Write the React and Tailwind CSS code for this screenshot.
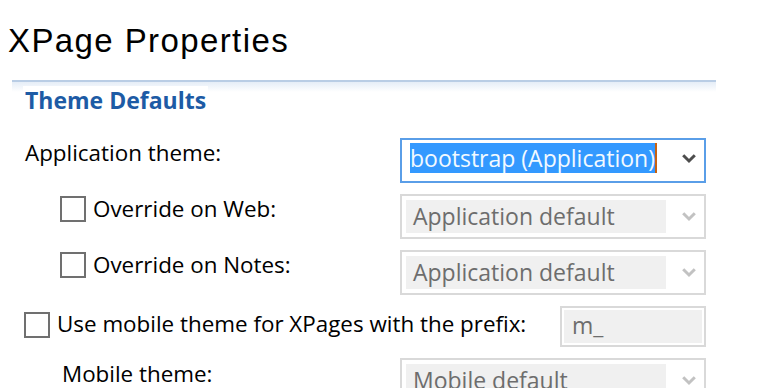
import React from 'react';

function Chevron({ color }) {
  return (
    <svg width="14" height="11" viewBox="0 0 14 11" className="block">
      <path d="M1.2 2.2 L7 8 L12.8 2.2" fill="none" stroke={color} strokeWidth="3" />
    </svg>
  );
}

function Checkbox({ className }) {
  return <div className={'w-[26px] h-[26px] shrink-0 border-2 border-[#707070] bg-white ' + className} />;
}

// disabled combo with grey field
function DisabledCombo({ value }) {
  return (
    <div className="w-[306px] h-[45px] shrink-0 border-2 border-[#d9d9d9] bg-white p-[4px] flex items-stretch text-[23px]">
      <div className="w-[260px] bg-[#f0f0f0] pl-[7px] text-[#6d6d6d] leading-[32px]">{value}</div>
      <div className="flex items-center ml-[16px]">
        <Chevron color="#c2c2c2" />
      </div>
    </div>
  );
}

export default function App() {
  return (
    <div className="w-[760px] h-[388px] overflow-hidden bg-white text-black font-['Open_Sans',sans-serif] text-[22.4px]">
      <h1 className="pl-[8px] pt-[25px] font-['Liberation_Sans',Arial,sans-serif] text-[33px] leading-[32px] tracking-[1.4px] text-black">
        XPage Properties
      </h1>

      {/* section header */}
      <div className="ml-[12px] mt-[23px] w-[704px] border-t-2 border-[#b9cde5]">
        <div className="pt-[4px] pl-[11px] leading-[28px] bg-[linear-gradient(to_bottom,#e5edf7,#ffffff_10px)]">
          <span className="block w-fit bg-white px-[2px] text-[23px] font-bold leading-[28px] text-[#1d5ba5]">Theme Defaults</span>
        </div>
      </div>

      <div className="mt-[24px] pr-[54px] flex flex-col gap-[11px]">
        {/* Application theme */}
        <div className="flex items-start h-[45px]">
          <span className="ml-[25px] mt-[1px] leading-[28px]">Application theme:</span>
          <div className="ml-auto w-[306px] h-[45px] border-2 border-[#5a9ee8] bg-white pl-[8px] pt-[3px] flex items-start text-[23px]">
            <span className="bg-[#3399ff] text-[#f2f9ff] leading-[30px] h-[30px]">bootstrap (Application)</span>
            <span className="w-[2px] h-[30px] bg-[#c8620f]" />
            <div className="ml-auto mr-[8px] mt-[10px]">
              <Chevron color="#4d4d4d" />
            </div>
          </div>
        </div>

        {/* Override on Web */}
        <div className="flex items-start h-[45px]">
          <Checkbox className="ml-[60px] mt-[2px]" />
          <span className="ml-[7px] mt-[1px] leading-[28px]">Override on Web:</span>
          <div className="ml-auto">
            <DisabledCombo value="Application default" />
          </div>
        </div>

        {/* Override on Notes */}
        <div className="flex items-start h-[45px]">
          <Checkbox className="ml-[60px] mt-[2px]" />
          <span className="ml-[7px] mt-[1px] leading-[28px]">Override on Notes:</span>
          <div className="ml-auto">
            <DisabledCombo value="Application default" />
          </div>
        </div>

        {/* mobile prefix */}
        <div className="flex items-start h-[41px]">
          <Checkbox className="ml-[24px] mt-[6px]" />
          <span className="ml-[7px] mt-[4px] leading-[28px]">Use mobile theme for XPages with the prefix:</span>
          <div className="ml-auto w-[146px] h-[41px] border-2 border-[#d9d9d9] bg-white p-[2px] text-[23px]">
            <div className="h-full bg-[#f0f0f0] pl-[8px] text-[#6d6d6d] leading-[30px]">m_</div>
          </div>
        </div>

        {/* Mobile theme */}
        <div className="flex items-start h-[45px]">
          <span className="ml-[62px] mt-[2px] leading-[28px]">Mobile theme:</span>
          <div className="ml-auto">
            <DisabledCombo value="Mobile default" />
          </div>
        </div>
      </div>
    </div>
  );
}
